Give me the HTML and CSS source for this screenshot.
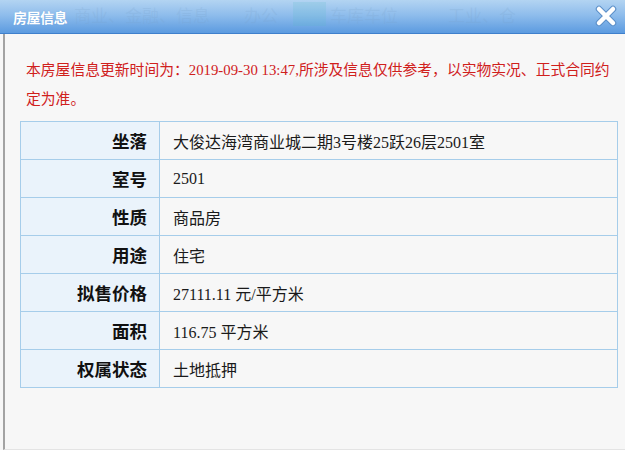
FILE: index.html
```html
<!DOCTYPE html>
<html lang="zh">
<head>
<meta charset="utf-8">
<title>房屋信息</title>
<link rel="stylesheet" href="styles.css">
</head>
<body>
<div class="dialog">
  <div class="header">
    <span class="title">房屋信息</span>
    <div class="ghost">
      <span class="g1">商业、金融、信息</span>
      <span class="g2">办公</span>
      <span class="gbox"></span>
      <span class="g3">车库车位</span>
      <span class="g4">工业、仓</span>
    </div>
    <svg class="close" width="22" height="22" viewBox="0 0 22 22">
      <path d="M4 4 L18 18 M18 4 L4 18" stroke="#5b8fc8" stroke-width="6.5" stroke-linecap="round" fill="none"/>
      <path d="M4 4 L18 18 M18 4 L4 18" stroke="#ffffff" stroke-width="4.5" stroke-linecap="round" fill="none"/>
    </svg>
  </div>
  <div class="body">
    <p class="notice">本房屋信息更新时间为：2019-09-30 13:47,所涉及信息仅供参考，以实物实况、正式合同约定为准。</p>
    <table class="info">
      <tr><th>坐落</th><td>大俊达海湾商业城二期3号楼25跃26层2501室</td></tr>
      <tr><th>室号</th><td>2501</td></tr>
      <tr><th>性质</th><td>商品房</td></tr>
      <tr><th>用途</th><td>住宅</td></tr>
      <tr><th>拟售价格</th><td>27111.11 元/平方米</td></tr>
      <tr><th>面积</th><td>116.75 平方米</td></tr>
      <tr><th>权属状态</th><td>土地抵押</td></tr>
    </table>
  </div>
</div>
</body>
</html>
```

FILE: styles.css
```css
html, body {
  margin: 0;
  padding: 0;
  background: #f7f7f7;
}
.dialog {
  width: 625px;
  height: 450px;
  display: flex;
  flex-direction: column;
  overflow: hidden;
}
.header {
  position: relative;
  height: 33px;
  flex: none;
  background: linear-gradient(to bottom, #b3d4f2 0%, #8fbdec 45%, #5c9be0 100%);
  border-bottom: 1px solid #3f80cc;
  display: flex;
  align-items: center;
}
.title {
  position: relative;
  z-index: 2;
  margin-left: 13px;
  color: #ffffff;
  font-family: "Noto Sans CJK SC", sans-serif;
  font-weight: bold;
  font-size: 14px;
  letter-spacing: -0.5px;
  text-shadow: 0 0 1px #6a9fd8;
}
.ghost {
  position: absolute;
  left: 0;
  top: 0;
  right: 0;
  height: 30px;
  font-family: "Noto Sans CJK SC", sans-serif;
  font-size: 17px;
  color: rgba(120, 160, 200, 0.2);
}
.ghost span {
  position: absolute;
  top: 2px;
}
.g1 { left: 74px; }
.g2 { left: 244px; }
.g3 { left: 330px; }
.g4 { left: 448px; }
.gbox {
  left: 293px;
  width: 33px;
  height: 24px;
  background: rgba(90, 190, 200, 0.18);
}
.close {
  position: absolute;
  right: 8px;
  top: 5px;
}
.body {
  flex: 1;
  margin-left: 3px;
  border-left: 2px solid #a3a3a3;
  border-bottom: 1px solid #e4e4e4;
  padding: 22px 8px 0 15px;
}
.notice {
  margin: 0 0 7px 6px;
  width: 592px;
  color: #d0201c;
  font-family: "Liberation Serif", "Noto Sans CJK SC", serif;
  font-size: 14.8px;
  line-height: 29px;
}
.info {
  width: 598px;
  border-collapse: collapse;
  border: 1px solid #a6cdea;
}
.info tr {
  height: 38px;
}
.info th, .info td {
  border: 1px solid #a6cdea;
  padding: 0;
}
.info th {
  width: 126px;
  padding-right: 12px;
  text-align: right;
  background: #eaf3fb;
  font-family: "Noto Sans CJK SC", sans-serif;
  font-weight: bold;
  font-size: 17.5px;
  color: #111111;
}
.info td {
  padding-left: 13px;
  background: #f7f7f7;
  font-family: "Liberation Serif", "Noto Sans CJK SC", serif;
  font-size: 16px;
  color: #1a1a1a;
}
```
